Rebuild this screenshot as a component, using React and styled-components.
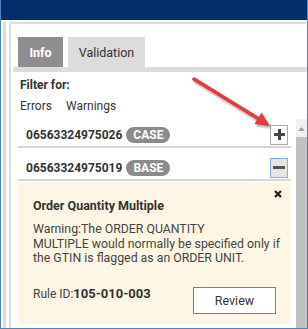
import React from "react"
import styled, { createGlobalStyle } from "styled-components"

const GlobalStyle = createGlobalStyle`
  html, body {
    margin: 0;
    padding: 0;
    background: #ffffff;
  }
  * {
    box-sizing: border-box;
  }
`

const Window = styled.div`
  position: relative;
  width: 308px;
  height: 329px;
  display: flex;
  flex-direction: column;
  border: 1px solid #4d84c6;
  border-top: none;
  font-family: Roboto, "Liberation Sans", sans-serif;
  color: #333333;
  overflow: hidden;
`

const TitleBar = styled.div`
  height: 20px;
  flex-shrink: 0;
  background: #022e6b;
  margin: 0 -1px;
`

const Body = styled.div`
  flex: 1;
  display: flex;
  padding: 2px 0 0 2px;
  min-height: 0;
`

const SideStrip = styled.div`
  width: 3px;
  background: #dcdcdc;
  margin-right: 3px;
`

const Panel = styled.div`
  flex: 1;
  display: flex;
  flex-direction: column;
  border-left: 2px solid #dcdcdc;
  border-top: 2px solid #dcdcdc;
  min-height: 0;
`

const TabBar = styled.div`
  display: flex;
  gap: 5px;
  margin: 13px 0 0 2px;
  padding-left: 5px;
  border-bottom: 5px solid #dcdcdc;
`

const Tab = styled.div`
  height: 30px;
  width: ${(p) => (p.$active ? "45px" : "77px")};
  display: flex;
  align-items: center;
  justify-content: center;
  font-size: 12.5px;
  font-weight: ${(p) => (p.$active ? 700 : 400)};
  background: ${(p) => (p.$active ? "#8f8d90" : "#dcdcdc")};
  color: ${(p) => (p.$active ? "#ffffff" : "#333333")};
`

const FilterBlock = styled.div`
  padding: 5px 0 0 9px;
`

const FilterLabel = styled.div`
  font-size: 12px;
  font-weight: 700;
  line-height: 16px;
`

const FilterOptions = styled.div`
  display: flex;
  gap: 14px;
  margin-top: 5px;
  font-size: 12px;
  line-height: 16px;
`

const ListArea = styled.div`
  flex: 1;
  display: flex;
  margin-top: 5px;
  min-height: 0;
`

const ListContent = styled.div`
  flex: 1;
  margin: 0 5px 0 7px;
  display: flex;
  flex-direction: column;
`

const ItemRow = styled.div`
  height: ${(p) => p.$height}px;
  display: flex;
  align-items: center;
  padding: ${(p) => p.$pad} 3px 0 8px;
  border-bottom: 2px solid #d6d6d6;
  flex-shrink: 0;
`

const Gtin = styled.span`
  font-size: 12px;
  font-weight: 700;
  color: #333333;
`

const Badge = styled.span`
  margin-left: 4px;
  width: 44px;
  height: 16px;
  border-radius: 8px;
  background: #8b8b8b;
  color: #ffffff;
  font-size: 12px;
  font-weight: 700;
  display: flex;
  align-items: center;
  justify-content: center;
`

const ToggleButton = styled.div`
  margin-left: auto;
  width: 18px;
  height: 20px;
  display: flex;
  align-items: center;
  justify-content: center;
  border: 1px solid ${(p) => (p.$open ? "#86acea" : "#a9a9a9")};
  background: ${(p) => (p.$open ? "#e5e5e5" : "#ffffff")};
`

const Card = styled.div`
  position: relative;
  flex: 1;
  background: #fdf6e4;
  padding: 16px 15px 10px 15px;
  display: flex;
  flex-direction: column;
  margin: 1px 0 5px;
`

const CloseIcon = styled.svg`
  position: absolute;
  top: 8px;
  right: 9px;
`

const CardTitle = styled.div`
  font-size: 12.5px;
  font-weight: 700;
  line-height: 16px;
  color: #333333;
`

const CardText = styled.div`
  margin: 8px -8px 0 0;
  font-size: 12.3px;
  line-height: 14.5px;
  color: #444444;
`

const RuleRow = styled.div`
  margin-top: 21px;
  display: flex;
  align-items: flex-start;
  justify-content: space-between;
`

const RuleText = styled.div`
  font-size: 12px;
  line-height: 14px;
  color: #444444;

  b {
    font-size: 13px;
    font-weight: 700;
    color: #333333;
  }
`

const ReviewButton = styled.div`
  width: 83px;
  height: 27px;
  border: 1px solid #7d7d7d;
  background: #ffffff;
  display: flex;
  align-items: center;
  justify-content: center;
  font-size: 12.5px;
  color: #333333;
`

const Scrollbar = styled.div`
  width: 11px;
  display: flex;
  flex-direction: column;
`

const ScrollUp = styled.div`
  height: 18px;
  background: #f0f0f0;
  display: flex;
  justify-content: center;
  padding-top: 8px;
`

const ScrollThumb = styled.div`
  flex: 1;
  background: #c1c1c1;
`

const ArrowOverlay = styled.svg`
  position: absolute;
  left: 0;
  top: 0;
  pointer-events: none;
  filter: drop-shadow(1px 2px 1px rgba(0, 0, 0, 0.35));
`

const PlusIcon = () => (
  <svg width="11" height="11" viewBox="0 0 11 11">
    <rect x="4" y="0" width="3" height="11" fill="#444" />
    <rect x="0" y="4" width="11" height="3" fill="#444" />
  </svg>
)

const MinusIcon = () => (
  <svg width="12" height="3" viewBox="0 0 12 3">
    <rect x="0" y="0" width="12" height="3" fill="#555" />
  </svg>
)

const items = [
  { gtin: "06563324975026", unit: "CASE", open: false, height: 29, pad: "4px" },
  { gtin: "06563324975019", unit: "BASE", open: true, height: 33, pad: "8px" },
]

export default function App() {
  return (
    <>
      <GlobalStyle />
      <Window>
        <TitleBar />
        <Body>
          <SideStrip />
          <Panel>
            <TabBar>
              <Tab $active>Info</Tab>
              <Tab>Validation</Tab>
            </TabBar>
            <FilterBlock>
              <FilterLabel>Filter for:</FilterLabel>
              <FilterOptions>
                <span>Errors</span>
                <span>Warnings</span>
              </FilterOptions>
            </FilterBlock>
            <ListArea>
              <ListContent>
                {items.map((item) => (
                  <ItemRow key={item.gtin} $height={item.height} $pad={item.pad}>
                    <Gtin>{item.gtin}</Gtin>
                    <Badge>{item.unit}</Badge>
                    <ToggleButton $open={item.open}>
                      {item.open ? <MinusIcon /> : <PlusIcon />}
                    </ToggleButton>
                  </ItemRow>
                ))}
                <Card>
                  <CloseIcon width="8" height="8" viewBox="0 0 8 8">
                    <path d="M1 1 L7 7 M7 1 L1 7" stroke="#222" strokeWidth="2.2" />
                  </CloseIcon>
                  <CardTitle>Order Quantity Multiple</CardTitle>
                  <CardText>
                    Warning:The ORDER QUANTITY
                    <br />
                    MULTIPLE would normally be specified only if the GTIN is flagged as an ORDER UNIT.
                  </CardText>
                  <RuleRow>
                    <RuleText>
                      Rule ID:<b>105-010-003</b>
                    </RuleText>
                    <ReviewButton>Review</ReviewButton>
                  </RuleRow>
                </Card>
              </ListContent>
              <Scrollbar>
                <ScrollUp>
                  <svg width="7" height="4" viewBox="0 0 7 4">
                    <path d="M0 4 L3.5 0 L7 4 Z" fill="#a3a3a3" />
                  </svg>
                </ScrollUp>
                <ScrollThumb />
              </Scrollbar>
            </ListArea>
          </Panel>
        </Body>
        <ArrowOverlay width="308" height="329" viewBox="0 0 308 329">
          <line x1="193" y1="79" x2="258" y2="119" stroke="#e8393f" strokeWidth="3.5" strokeLinecap="round" />
          <polygon points="269,126 253.5,124 260.5,112.5" fill="#e8393f" />
        </ArrowOverlay>
      </Window>
    </>
  )
}
